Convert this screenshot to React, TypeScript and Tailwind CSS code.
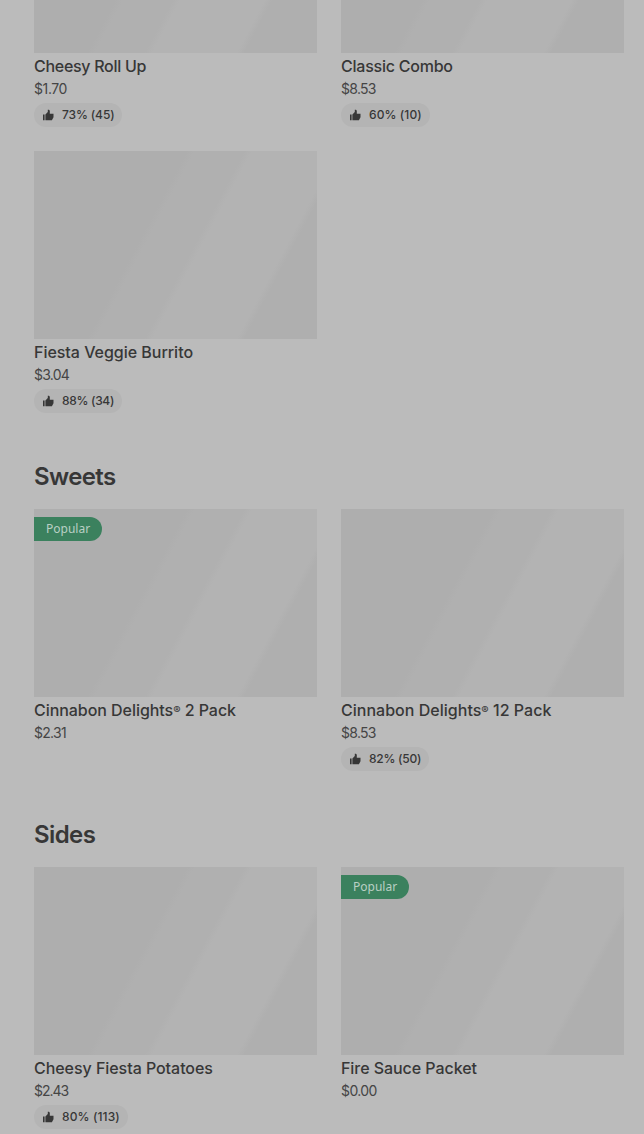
import { clsx } from 'clsx';

type Item = {
  name: string;
  price: string;
  rating?: string;
  popular?: boolean;
  nameSpacing: string;
  priceSpacing: string;
  ratingSpacing?: string;
};

const veggie: Item[] = [
  { name: 'Cheesy Roll Up', price: '$1.70', rating: '73% (45)', nameSpacing: 'tracking-[-0.29px]', priceSpacing: 'tracking-[-0.4px]', ratingSpacing: 'tracking-[-0.12px]' },
  { name: 'Classic Combo', price: '$8.53', rating: '60% (10)', nameSpacing: 'tracking-[-0.23px]', priceSpacing: 'tracking-[-0.7px]', ratingSpacing: 'tracking-[0.1px]' },
  { name: 'Fiesta Veggie Burrito', price: '$3.04', rating: '88% (34)', nameSpacing: 'tracking-[-0.03px]', priceSpacing: 'tracking-[-0.75px]', ratingSpacing: 'tracking-[-0.3px]' },
];

const sweets: Item[] = [
  { name: 'Cinnabon Delights® 2 Pack', price: '$2.31', popular: true, nameSpacing: 'tracking-[-0.05px]', priceSpacing: 'tracking-[-0.7px]' },
  { name: 'Cinnabon Delights® 12 Pack', price: '$8.53', rating: '82% (50)', nameSpacing: 'tracking-[0.02px]', priceSpacing: 'tracking-[-0.7px]', ratingSpacing: 'tracking-[-0.25px]' },
];

const sides: Item[] = [
  { name: 'Cheesy Fiesta Potatoes', price: '$2.43', rating: '80% (113)', nameSpacing: 'tracking-[-0.05px]', priceSpacing: 'tracking-[-1px]', ratingSpacing: 'tracking-[0.12px]' },
  { name: 'Fire Sauce Packet', price: '$0.00', popular: true, nameSpacing: 'tracking-[-0.06px]', priceSpacing: 'tracking-[-0.6px]' },
];

function ThumbIcon() {
  return (
    <svg className="h-3 w-3 shrink-0" viewBox="0 0 12 12" fill="currentColor">
      <path d="M1 5.5h1.6v5.8H1zM3.4 5.5 5.8 3V.8c1.1-.4 2 .2 2 1.3v2.7h3.7v3.4l-1.6 3.1H3.4z" />
    </svg>
  );
}

function ItemName({ name }: { name: string }) {
  const [before, after] = name.split('®');
  if (after === undefined) return <>{name}</>;
  return (
    <>
      {before}
      <span className="relative -top-0.5 text-[11px]">®</span>
      {after}
    </>
  );
}

function ItemCard({ item }: { item: Item }) {
  return (
    <div className="flex flex-col items-start">
      <div className="h-[188px] w-full bg-[linear-gradient(118deg,#aeaeae_0%,#aeaeae_40%,#b0b0b0_42%,#b0b0b0_55%,#b3b3b3_57%,#b3b3b3_79%,#afafaf_81%)] pt-2">
        {item.popular && (
          <span className="flex h-6 w-[68px] items-center rounded-r-full bg-[#3b815e] pl-3 font-['Noto_Sans',sans-serif] text-xs text-[#b9cfc4]">
            Popular
          </span>
        )}
      </div>
      <h3 className={clsx('mt-px h-[25px] text-base leading-6 font-medium whitespace-nowrap', item.nameSpacing)}>
        <ItemName name={item.name} />
      </h3>
      <p className={clsx('h-5 text-sm leading-5 text-[#454545]', item.priceSpacing)}>{item.price}</p>
      {item.rating && (
        <div className="mt-1 flex h-6 items-center gap-2 rounded-full bg-[#b4b4b4] px-2">
          <ThumbIcon />
          <span className={clsx('text-xs leading-6 font-medium whitespace-nowrap', item.ratingSpacing)}>
            {item.rating}
          </span>
        </div>
      )}
    </div>
  );
}

function Section({ title, items }: { title?: string; items: Item[] }) {
  return (
    <section>
      {title && (
        <h2 className="mt-12 mb-4 text-2xl leading-8 font-semibold tracking-[-0.6px]">{title}</h2>
      )}
      <div className="grid grid-cols-[283px_283px] gap-6">
        {items.map((item) => (
          <ItemCard key={item.name} item={item} />
        ))}
      </div>
    </section>
  );
}

export default function App() {
  return (
    <main className="h-[1134px] overflow-hidden bg-[#bbbbbb] px-[34px] font-['Inter',sans-serif] text-[#373737]">
      <div className="-mt-[135px]">
        <Section items={veggie} />
        <Section title="Sweets" items={sweets} />
        <Section title="Sides" items={sides} />
      </div>
    </main>
  );
}
